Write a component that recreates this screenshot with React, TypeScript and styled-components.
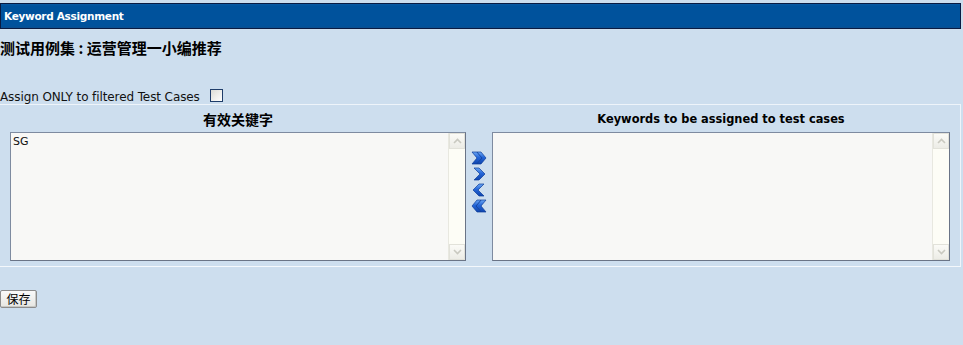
import React from 'react'
import styled, { createGlobalStyle } from 'styled-components'

const GlobalStyle = createGlobalStyle`
  html, body {
    margin: 0;
    padding: 0;
    background: #cddeee;
  }
  body {
    font-family: Tahoma, "DejaVu Sans", "Noto Sans CJK SC", sans-serif;
    color: #000;
  }
`

const Page = styled.div`
  width: 963px;
  height: 345px;
  padding-top: 3px;
  box-sizing: border-box;
  background: #cddeee;
  overflow: hidden;
`

const TitleBar = styled.div`
  width: 961px;
  height: 26px;
  box-sizing: border-box;
  border: 1px solid #0a1b42;
  background: linear-gradient(#0a5aa3 0, #00529c 2px, #00529c 22px, #0b4e8f 100%);
  color: #fff;
  font-family: "DejaVu Sans", sans-serif;
  font-weight: bold;
  font-size: 10.5px;
  letter-spacing: -0.3px;
  line-height: 24px;
  padding-left: 3px;
`

const SuiteName = styled.h2`
  margin: 10px 0 0;
  font-family: "Noto Sans CJK SC", sans-serif;
  font-size: 15px;
  font-weight: bold;
  line-height: 18px;
  height: 18px;
  white-space: pre;
`

const FilterRow = styled.label`
  display: flex;
  align-items: center;
  gap: 10px;
  margin-top: 32px;
  height: 15px;
  font-family: "DejaVu Sans", sans-serif;
  font-size: 12px;
  letter-spacing: -0.1px;
  color: #111;
`

const Checkbox = styled.span`
  width: 11px;
  height: 11px;
  border: 1px solid #1f3d6a;
  background: linear-gradient(135deg, #dcdcd6, #fff);
  margin-top: -3px;
`

const Fieldset = styled.div`
  margin-top: 0;
  width: 961px;
  height: 163px;
  box-sizing: border-box;
  border-top: 1px solid #eef4fa;
  border-right: 1px solid #eef4fa;
  border-bottom: 1px solid #f4f8fc;
  display: grid;
  grid-template-columns: 456px 26px 458px;
  grid-template-rows: 27px 129px;
  padding-left: 10px;
`

const ColumnHead = styled.div<{ $col: number; $cjk?: boolean }>`
  font-family: ${p => (p.$cjk ? '"Noto Sans CJK SC"' : '"DejaVu Sans"')}, sans-serif;
  font-size: ${p => (p.$cjk ? '14px' : '11.4px')};
  font-weight: bold;
  text-align: center;
  line-height: 16px;
  padding-top: 6px;
  grid-row: 1;
  grid-column: ${p => p.$col};
`

const ListBox = styled.div<{ $col: number }>`
  grid-row: 2;
  grid-column: ${p => p.$col};
  display: flex;
  border: 1px solid #7e8ba0;
  border-right-color: #6a7486;
  border-bottom-color: #6a7486;
  background: #f8f8f6;
  box-sizing: border-box;
  height: 129px;
`

const Options = styled.div`
  flex: 1;
  padding: 2px 2px;
  font-family: "DejaVu Sans", sans-serif;
  font-size: 11px;
  line-height: 13px;
  color: #111;
`

const ScrollBar = styled.div`
  width: 16px;
  display: flex;
  flex-direction: column;
  justify-content: space-between;
  background: #fdfdf6;
  border-left: 1px solid #e8e8e0;
`

const ScrollButton = styled.div`
  height: 16px;
  display: flex;
  align-items: center;
  justify-content: center;
  background: linear-gradient(#fbfbf7, #ecece6);
  border: 1px solid #e2e2da;
  box-sizing: border-box;
`

const Movers = styled.div`
  grid-row: 2;
  grid-column: 2;
  display: flex;
  flex-direction: column;
  align-items: center;
  padding-top: 19px;
  gap: 2px;
  padding-right: 1px;
`

const MoverButton = styled.button`
  border: 0;
  padding: 0;
  background: none;
  width: 16px;
  height: 14px;
  display: flex;
  cursor: pointer;
`

const SaveButton = styled.button`
  margin-top: 23px;
  height: 18px;
  width: 37px;
  padding: 0;
  font-family: "Noto Sans CJK SC", sans-serif;
  font-size: 12px;
  line-height: 14px;
  color: #000;
  background: linear-gradient(#fafafa, #e6e6e2);
  border: 1px solid #8c8c8c;
  border-radius: 2px;
  box-shadow: inset -1px -1px 0 #c8c8c4;
`

const Chevron = ({ up }: { up?: boolean }) => (
  <svg width="9" height="6" viewBox="0 0 9 6">
    <path
      d={up ? 'M1 5 L4.5 1.5 L8 5' : 'M1 1 L4.5 4.5 L8 1'}
      fill="none"
      stroke="#c9c9c0"
      strokeWidth="1.6"
    />
  </svg>
)

const MoveIcon = ({ dir, double }: { dir: 'l' | 'r'; double?: boolean }) => {
  const id = `g${dir}${double ? 2 : 1}`
  const paths = double
    ? ['M1 1 L6 1 L11 7 L6 13 L1 13 L6 7 Z', 'M6 1 L10 1 L15 7 L10 13 L6 13 L11 7 Z']
    : ['M3 1 L8 1 L14 7 L8 13 L3 13 L9 7 Z']
  return (
    <svg width="16" height="14" viewBox="0 0 16 14">
      <defs>
        <linearGradient id={id} x1="0" y1="0" x2="0" y2="1">
          <stop offset="0" stopColor="#6aa6f4" />
          <stop offset="0.45" stopColor="#2466d8" />
          <stop offset="1" stopColor="#0f45ae" />
        </linearGradient>
      </defs>
      <g transform={dir === 'l' ? 'translate(16 0) scale(-1 1)' : undefined}>
        {paths.map((d, i) => (
          <path key={i} d={d} fill={`url(#${id})`} stroke="#0d3c98" strokeWidth="0.7" />
        ))}
      </g>
    </svg>
  )
}

const SelectList = ({ col, items }: { col: number; items: string[] }) => (
  <ListBox $col={col}>
    <Options>
      {items.map(item => (
        <div key={item}>{item}</div>
      ))}
    </Options>
    <ScrollBar>
      <ScrollButton>
        <Chevron up />
      </ScrollButton>
      <ScrollButton>
        <Chevron />
      </ScrollButton>
    </ScrollBar>
  </ListBox>
)

const App = () => {
  return (
    <Page>
      <GlobalStyle />
      <TitleBar>Keyword Assignment</TitleBar>
      <SuiteName>测试用例集 : 运营管理一小编推荐</SuiteName>
      <FilterRow>
        Assign ONLY to filtered Test Cases
        <Checkbox />
      </FilterRow>
      <Fieldset>
        <ColumnHead $col={1} $cjk>
          有效关键字
        </ColumnHead>
        <ColumnHead $col={3}>Keywords to be assigned to test cases</ColumnHead>
        <SelectList col={1} items={['SG']} />
        <Movers>
          <MoverButton title="Add all">
            <MoveIcon dir="r" double />
          </MoverButton>
          <MoverButton title="Add">
            <MoveIcon dir="r" />
          </MoverButton>
          <MoverButton title="Remove">
            <MoveIcon dir="l" />
          </MoverButton>
          <MoverButton title="Remove all">
            <MoveIcon dir="l" double />
          </MoverButton>
        </Movers>
        <SelectList col={3} items={[]} />
      </Fieldset>
      <SaveButton>保存</SaveButton>
    </Page>
  )
}

export default App
